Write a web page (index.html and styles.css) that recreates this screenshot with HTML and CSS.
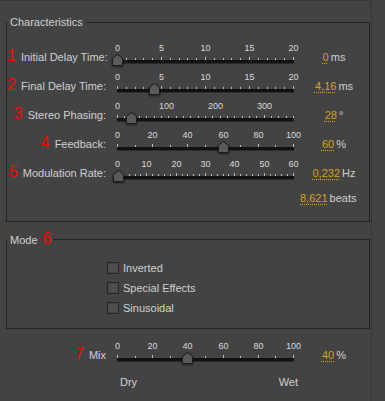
FILE: index.html
```html
<!DOCTYPE html>
<html lang="en">
<head>
  <meta charset="UTF-8" />
  <title>Chorus / Flanger</title>
  <link rel="stylesheet" href="styles.css">
</head>
<body>
  <div class="panel">
    <fieldset class="group chars">
      <legend>Characteristics</legend>
      <div class="row">
        <label class="name"><span class="num">1</span>Initial Delay Time:</label>
        <div class="slider" data-min="0" data-max="20" data-step="1" data-value="0" data-labels="0,5,10,15,20"></div>
        <div class="value"><span class="amount">0</span><span class="unit">ms</span></div>
      </div>
      <div class="row">
        <label class="name"><span class="num">2</span>Final Delay Time:</label>
        <div class="slider" data-min="0" data-max="20" data-step="1" data-value="4.16" data-labels="0,5,10,15,20"></div>
        <div class="value"><span class="amount">4,16</span><span class="unit">ms</span></div>
      </div>
      <div class="row">
        <label class="name"><span class="num">3</span>Stereo Phasing:</label>
        <div class="slider" data-min="0" data-max="360" data-step="15" data-value="28" data-labels="0,100,200,300"></div>
        <div class="value"><span class="amount">28</span><span class="unit">°</span></div>
      </div>
      <div class="row">
        <label class="name"><span class="num">4</span>Feedback:</label>
        <div class="slider" data-min="0" data-max="100" data-step="10" data-value="60" data-labels="0,20,40,60,80,100"></div>
        <div class="value"><span class="amount">60</span><span class="unit">%</span></div>
      </div>
      <div class="row">
        <label class="name"><span class="num">5</span>Modulation Rate:</label>
        <div class="slider" data-min="0" data-max="60" data-step="2" data-value="0.232" data-labels="0,10,20,30,40,50,60"></div>
        <div class="value"><span class="amount">0,232</span><span class="unit">Hz</span></div>
      </div>
      <div class="row short">
        <div class="value beats"><span class="amount">8,621</span><span class="unit">beats</span></div>
      </div>
    </fieldset>

    <fieldset class="group mode">
      <legend>Mode<span class="num">6</span></legend>
      <div class="options">
        <label class="check"><span class="box"></span>Inverted</label>
        <label class="check"><span class="box"></span>Special Effects</label>
        <label class="check"><span class="box"></span>Sinusoidal</label>
      </div>
    </fieldset>

    <div class="row mix">
      <label class="name"><span class="num">7</span>Mix</label>
      <div class="slider" data-min="0" data-max="100" data-step="10" data-value="40" data-labels="0,20,40,60,80,100"></div>
      <div class="value"><span class="amount">40</span><span class="unit">%</span></div>
    </div>
    <div class="ends"><span>Dry</span><span>Wet</span></div>
  </div>

  <script src="script.js"></script>
</body>
</html>
```

FILE: styles.css
```css
body {
  margin: 0;
  background: #434343;
  color: #d0d0d0;
  font-family: "Liberation Sans", Arial, sans-serif;
  font-size: 11px;
}
.panel {
  width: 371px;
  height: 400px;
  border-top: 1px solid #383838;
  border-right: 1px solid #363636;
  overflow: hidden;
}
.group {
  box-sizing: border-box;
  width: 364px;
  margin: 14px 0 0 6px;
  border: 1px solid #242424;
  padding: 13px 0 12px 0;
  min-width: 0;
}
.group legend {
  padding: 0 3px;
  line-height: 14px;
}
.group.mode {
  margin-top: 10px;
  padding: 11px 0 10px 0;
}
.mode legend { padding-right: 2px; }
.mode legend .num { margin: 0 0 0 5px; }
.options { padding-left: 100px; }

.num {
  color: #ff0000;
  font-size: 16px;
  line-height: 14px;
  margin-right: 5px;
}

.row {
  display: grid;
  grid-template-columns: 110px 183px 68px;
  height: 29px;
  align-items: center;
}
.row.short { height: 22px; }
.name {
  text-align: right;
  padding-right: 11px;
  line-height: 14px;
  white-space: nowrap;
}

.slider {
  position: relative;
  width: 177px;
  height: 29px;
}
.slider::before {
  content: "";
  position: absolute;
  left: 0;
  top: 18px;
  width: 177px;
  height: 3px;
  background: #111;
  box-shadow: 0 1px 0 #2c2c2c;
}
.tick {
  position: absolute;
  top: 16px;
  width: 1px;
  height: 2px;
  background: #bdbdbd;
}
.tick.major {
  top: 15px;
  height: 3px;
}
.mark {
  position: absolute;
  top: 1px;
  font-size: 9px;
  line-height: 10px;
  color: #dadada;
  transform: translateX(-50%);
}
.thumb {
  position: absolute;
  top: 12px;
  width: 11px;
  height: 12px;
  filter: drop-shadow(0 1px 1px rgba(0, 0, 0, 0.6));
}
.thumb svg { display: block; }

.value {
  grid-column: 3;
  text-align: center;
  line-height: 14px;
  white-space: nowrap;
}
.value.beats {
  text-align: left;
}
.amount {
  color: #d6a11e;
  text-decoration: underline dotted #d6a11e;
  text-underline-offset: 2px;
}
.unit {
  margin-left: 2px;
}

.check {
  display: flex;
  align-items: center;
  gap: 4px;
  height: 20px;
  line-height: 14px;
}
.box {
  box-sizing: border-box;
  width: 12px;
  height: 12px;
  border: 1px solid #262626;
  background: #4e4e4e;
  box-shadow: inset 0 0 0 1px #474747;
}

.row.mix {
  margin-top: 11px;
  padding-left: 7px;
}
.ends {
  display: flex;
  justify-content: space-between;
  width: 178px;
  margin: 6px 0 0 120px;
  line-height: 14px;
}
```

FILE: script.js
```js
// build ticks, scale numbers and thumb for each slider from its data-* attributes
var TRACK = 176;

document.querySelectorAll(".slider").forEach(function (el) {
  var min = +el.dataset.min;
  var max = +el.dataset.max;
  var step = +el.dataset.step;
  var value = +el.dataset.value;
  var labels = el.dataset.labels.split(",").map(Number);

  function pos(v) {
    return Math.round((v - min) / (max - min) * TRACK);
  }

  var n = Math.round((max - min) / step);
  for (var i = 0; i <= n; i++) {
    var v = min + i * step;
    var t = document.createElement("span");
    t.className = labels.indexOf(v) > -1 ? "tick major" : "tick";
    t.style.left = pos(v) + "px";
    el.appendChild(t);
  }

  labels.forEach(function (v) {
    var m = document.createElement("span");
    m.className = "mark";
    m.textContent = v;
    m.style.left = (pos(v) + 0.5) + "px";
    el.appendChild(m);
  });

  var th = document.createElement("span");
  th.className = "thumb";
  th.style.left = (pos(value) - 5) + "px";
  th.innerHTML = '<svg width="11" height="12" viewBox="0 0 11 12">' +
    '<path d="M0.5 4.5 L5.5 0.5 L10.5 4.5 L10.5 11.5 L0.5 11.5 Z" fill="#5a5a5a" stroke="#1d1d1d"/></svg>';
  el.appendChild(th);
});
```
